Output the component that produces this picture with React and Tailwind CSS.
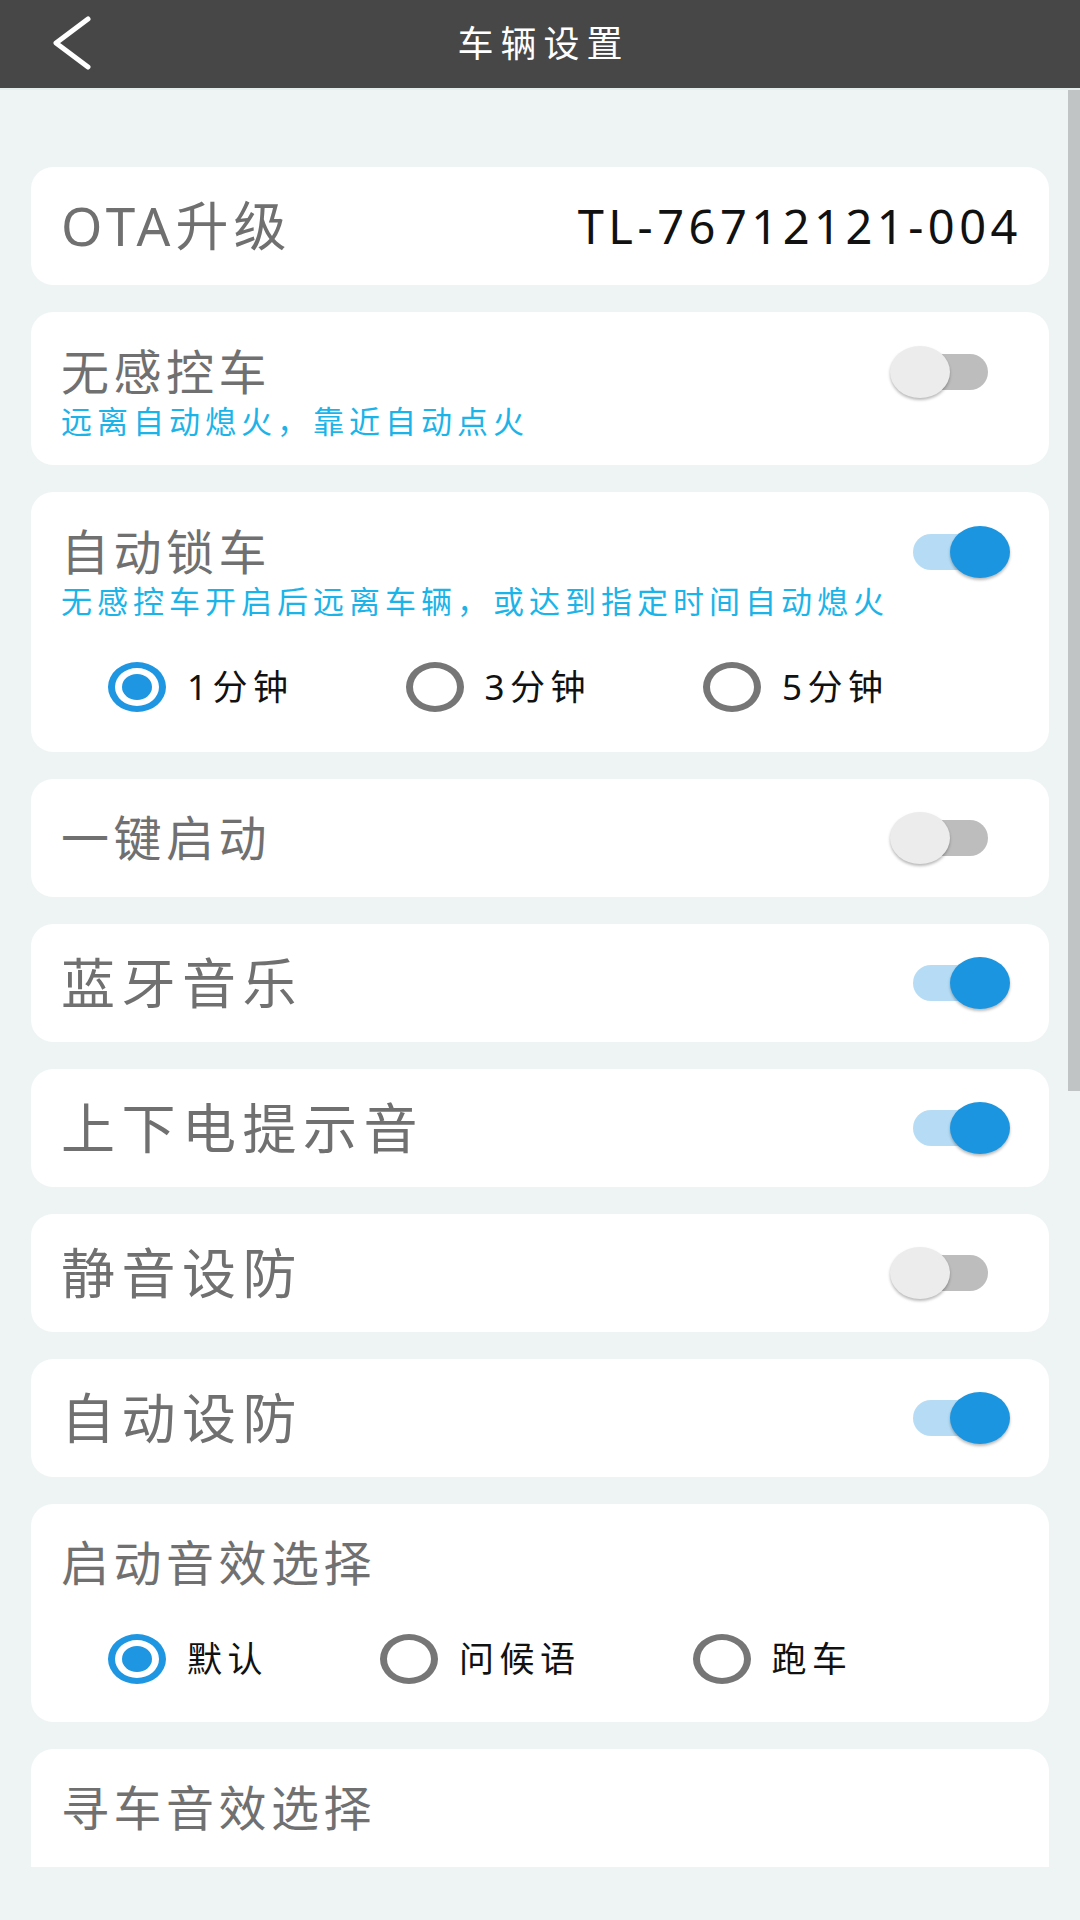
import { useState } from 'react';

const FONT = "font-['Noto_Sans','Noto_Sans_CJK_SC',sans-serif]";

function Toggle({ on, onChange }) {
  return (
    <button
      type="button"
      onClick={() => onChange(!on)}
      className="relative w-[120px] h-[52px] shrink-0"
    >
      <span
        className={`absolute left-[23px] top-[8px] w-[75px] h-[36px] rounded-full ${
          on ? 'bg-[#b6dcf5]' : 'bg-[#bdbdbd]'
        }`}
      />
      <span
        className={`absolute top-0 w-[60px] h-[52px] rounded-[50%] shadow-[0_2px_3px_rgba(0,0,0,0.28)] ${
          on ? 'left-[60px] bg-[#1b95e0]' : 'left-0 bg-[#ececec]'
        }`}
      />
    </button>
  );
}

function Radio({ checked, label, onClick }) {
  return (
    <button type="button" onClick={onClick} className="flex items-center gap-[21px]">
      <span
        className={`w-[58px] h-[50px] rounded-[50%] border-x-[7px] border-y-[6px] flex items-center justify-center ${
          checked ? 'border-[#1e96e2]' : 'border-[#767676]'
        }`}
      >
        {checked && <span className="w-[30px] h-[26px] rounded-[50%] bg-[#1e96e2]" />}
      </span>
      <span className="text-[35px] tracking-[5.5px] leading-[50px] text-[#111]">{label}</span>
    </button>
  );
}

function RadioRow({ options, value, onChange }) {
  return (
    <div className="flex items-center gap-[112px] ml-[47px] h-[52px]">
      {options.map((opt) => (
        <Radio key={opt} label={opt} checked={value === opt} onClick={() => onChange(opt)} />
      ))}
    </div>
  );
}

function SwitchCard({ title, on, onChange, small }) {
  return (
    <div className="bg-white rounded-[22px] h-[118px] shrink-0 flex items-center justify-between pl-[30px] pr-[39px]">
      <span
        className={`leading-[60px] text-[#707070] ${
          small ? 'text-[48px] tracking-[4.5px]' : 'text-[54px] tracking-[6.5px]'
        }`}
      >
        {title}
      </span>
      <Toggle on={on} onChange={onChange} />
    </div>
  );
}

export default function App() {
  const [sensorless, setSensorless] = useState(false);
  const [autoLock, setAutoLock] = useState(true);
  const [lockTime, setLockTime] = useState('1分钟');
  const [oneKey, setOneKey] = useState(false);
  const [bluetooth, setBluetooth] = useState(true);
  const [powerTone, setPowerTone] = useState(true);
  const [silentArm, setSilentArm] = useState(false);
  const [autoArm, setAutoArm] = useState(true);
  const [startSound, setStartSound] = useState('默认');

  return (
    <div className={`relative w-[1080px] h-[1920px] overflow-hidden bg-[#eef4f4] ${FONT}`}>
      {/* Header */}
      <div className="grid grid-cols-[140px_1fr_140px] items-center h-[88px] bg-[#474747]">
        <button type="button" className="pl-[50px] flex items-center">
          <svg width="44" height="58" viewBox="0 0 44 58" fill="none">
            <polyline
              points="38,4 6,28 38,52"
              stroke="#fff"
              strokeWidth="5"
              strokeLinecap="round"
              strokeLinejoin="round"
            />
          </svg>
        </button>
        <h1 className="text-center text-white text-[36px] tracking-[7px] leading-none font-normal pl-[7px]">
          车辆设置
        </h1>
        <div />
      </div>
      <div className="h-[2px] bg-[#e4ecec]" />

      {/* Settings list, clipped at the bottom like a scrolled view */}
      <div className="h-[1777px] overflow-hidden px-[31px] pt-[77px] flex flex-col gap-[27px]">
        {/* OTA */}
        <div className="bg-white rounded-[22px] h-[118px] shrink-0 flex items-center justify-between pl-[30px] pr-[27px]">
          <span className="text-[53px] tracking-[5px] leading-[60px] text-[#707070]">OTA升级</span>
          <span className="text-[47px] tracking-[4.5px] leading-[60px] text-[#111]">TL-76712121-004</span>
        </div>

        {/* 无感控车 */}
        <div className="bg-white rounded-[22px] shrink-0 pl-[30px] pr-[39px] pt-[30px] pb-[25px]">
          <div className="flex items-center justify-between h-[60px]">
            <span className="text-[48px] tracking-[4.5px] leading-[60px] text-[#707070]">无感控车</span>
            <Toggle on={sensorless} onChange={setSensorless} />
          </div>
          <p className="text-[31px] tracking-[5px] leading-[38px] text-[#1cb4e8]">
            远离自动熄火，靠近自动点火
          </p>
        </div>

        {/* 自动锁车 */}
        <div className="bg-white rounded-[22px] shrink-0 pl-[30px] pr-[39px] pt-[30px] pb-[39px]">
          <div className="flex items-center justify-between h-[60px]">
            <span className="text-[48px] tracking-[4.5px] leading-[60px] text-[#707070]">自动锁车</span>
            <Toggle on={autoLock} onChange={setAutoLock} />
          </div>
          <p className="text-[31px] tracking-[5px] leading-[38px] text-[#1cb4e8]">
            无感控车开启后远离车辆，或达到指定时间自动熄火
          </p>
          <div className="mt-[41px]">
            <RadioRow options={['1分钟', '3分钟', '5分钟']} value={lockTime} onChange={setLockTime} />
          </div>
        </div>

        <SwitchCard small title="一键启动" on={oneKey} onChange={setOneKey} />
        <SwitchCard title="蓝牙音乐" on={bluetooth} onChange={setBluetooth} />
        <SwitchCard title="上下电提示音" on={powerTone} onChange={setPowerTone} />
        <SwitchCard title="静音设防" on={silentArm} onChange={setSilentArm} />
        <SwitchCard title="自动设防" on={autoArm} onChange={setAutoArm} />

        {/* 启动音效选择 */}
        <div className="bg-white rounded-[22px] shrink-0 pl-[30px] pt-[29px] pb-[37px]">
          <div className="h-[60px] text-[48px] tracking-[4.5px] leading-[60px] text-[#707070]">启动音效选择</div>
          <div className="mt-[40px]">
            <RadioRow options={['默认', '问候语', '跑车']} value={startSound} onChange={setStartSound} />
          </div>
        </div>

        {/* 寻车音效选择 (continues below the visible area) */}
        <div className="bg-white rounded-[22px] shrink-0 h-[200px] pl-[30px] pt-[29px]">
          <div className="h-[60px] text-[48px] tracking-[4.5px] leading-[60px] text-[#707070]">寻车音效选择</div>
        </div>
      </div>

      {/* Scroll indicator */}
      <div className="absolute right-0 top-[90px] w-[12px] h-[1001px] bg-[#c0c4c5]" />
    </div>
  );
}
